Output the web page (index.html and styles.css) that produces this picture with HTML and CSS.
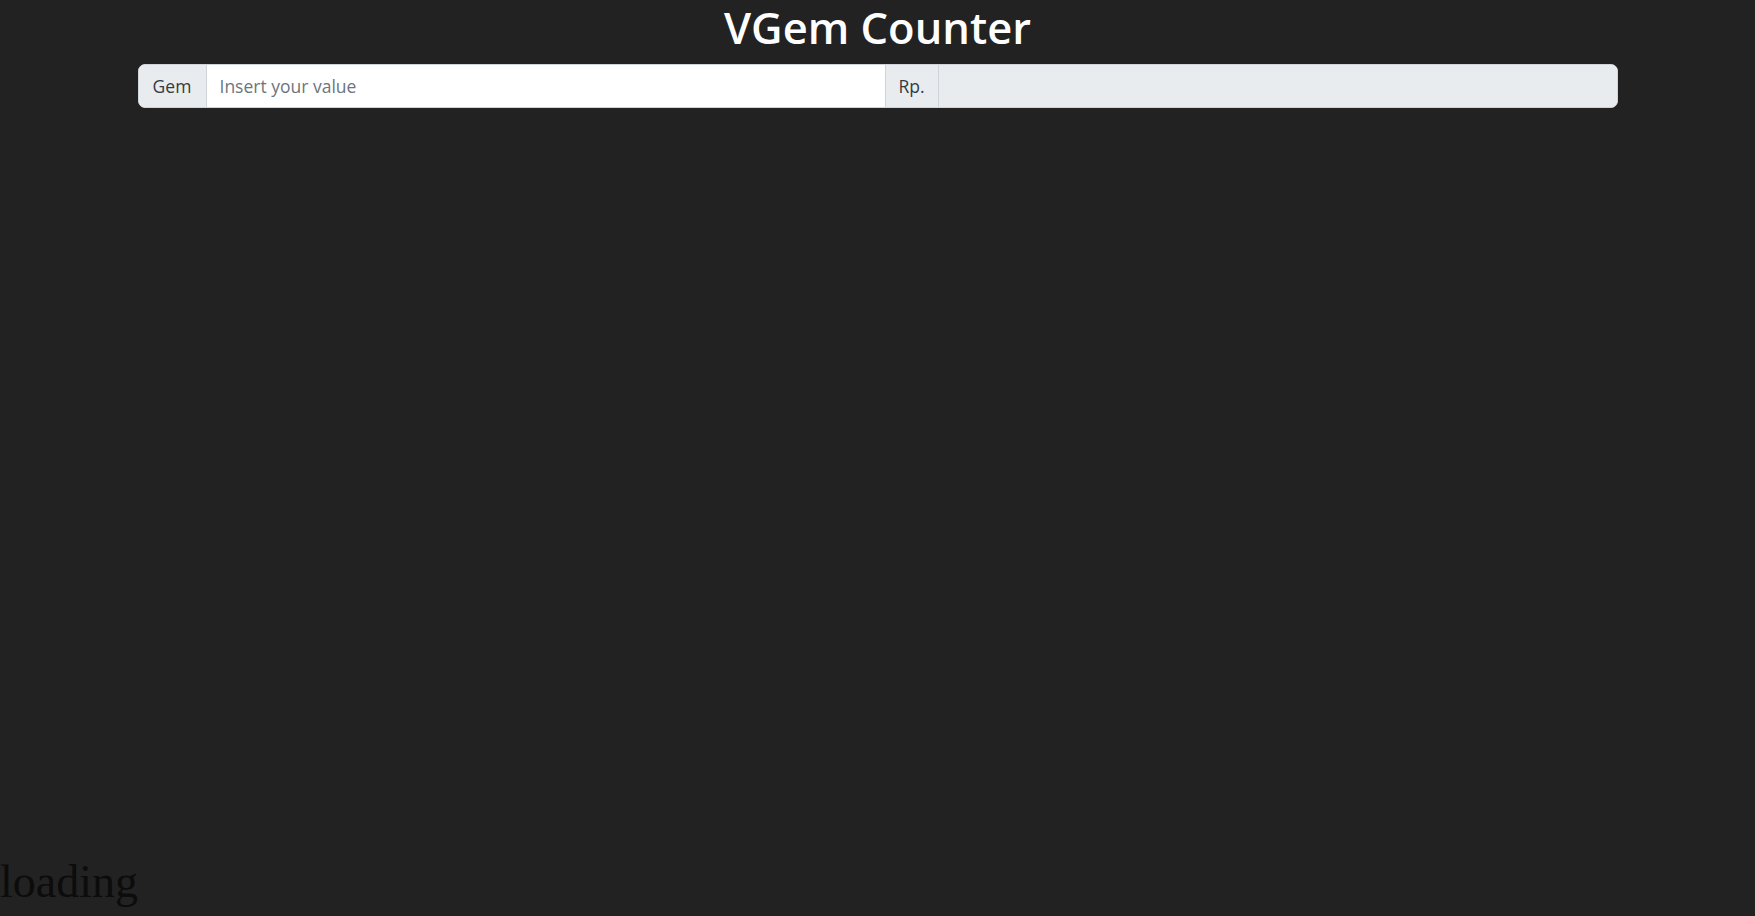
FILE: index.html
```html
<!DOCTYPE html>
<html lang="en">
<head>
<meta charset="utf-8">
<title>VGem Counter</title>
<link rel="stylesheet" href="styles.css">
</head>
<body>
<main class="page">
  <h1 class="title">VGem Counter</h1>
  <div class="container">
    <div class="input-group">
      <span class="addon addon-gem">Gem</span>
      <input class="field" type="text" placeholder="Insert your value">
      <span class="addon addon-rp">Rp.</span>
      <input class="field field-readonly" type="text" readonly>
    </div>
  </div>
  <div class="loading">loading</div>
</main>
</body>
</html>
```
FILE: styles.css
```css
html, body {
  margin: 0;
  padding: 0;
  background: #222222;
}
.page {
  min-height: 916px;
  display: flex;
  flex-direction: column;
  font-family: "Open Sans", "Noto Sans", sans-serif;
}
.title {
  margin: 0 0 9px 0;
  text-align: center;
  color: #ffffff;
  font-size: 43.5px;
  font-weight: 600;
  line-height: 55px;
}
.container {
  width: 1480px;
  margin: 0 auto;
}
.input-group {
  display: flex;
  height: 44px;
  border-radius: 7px;
  overflow: hidden;
  border: 1px solid #ced4da;
  box-sizing: border-box;
  background: #ffffff;
}
.addon {
  display: flex;
  align-items: center;
  justify-content: center;
  background: #e9ecef;
  color: #333a40;
  font-size: 17.5px;
  box-sizing: border-box;
  flex: none;
}
.addon-gem {
  width: 68px;
  border-right: 1px solid #ced4da;
}
.addon-rp {
  width: 54px;
  border-left: 1px solid #ced4da;
  border-right: 1px solid #ced4da;
}
.field {
  flex: 1 1 0;
  min-width: 0;
  border: none;
  outline: none;
  margin: 0;
  padding: 0 13px;
  font-family: "Open Sans", "Noto Sans", sans-serif;
  font-size: 17.5px;
  color: #212529;
  background: #ffffff;
}
.field::placeholder {
  color: #6c757d;
}
.field-readonly {
  background: #e9ecef;
}
.loading {
  margin-top: auto;
  margin-bottom: 9px;
  font-family: "Liberation Serif", "Times New Roman", serif;
  font-size: 46px;
  line-height: 51px;
  color: #0c0c0c;
}
```
